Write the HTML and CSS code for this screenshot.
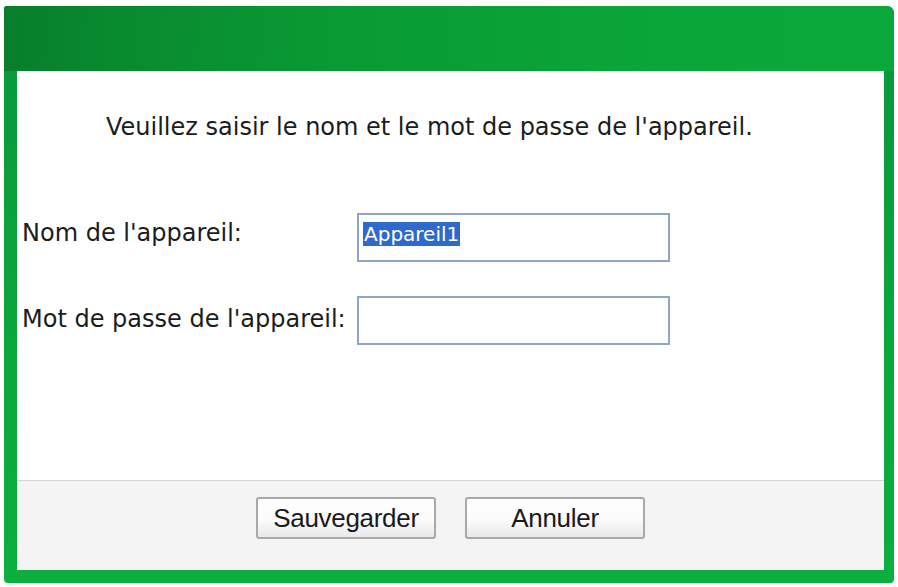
FILE: index.html
```html
<!DOCTYPE html>
<html lang="fr">
<head>
<meta charset="utf-8">
<title>Appareil</title>
<link rel="stylesheet" href="styles.css">
</head>
<body>
<div class="frame">
  <div class="band"></div>
  <div class="panel">
    <div class="content">
      <p class="intro">Veuillez saisir le nom et le mot de passe de l'appareil.</p>
      <div class="row row-first">
        <label class="label">Nom de l'appareil:</label>
        <div class="field"><span class="selected">Appareil1</span></div>
      </div>
      <div class="row row-second">
        <label class="label">Mot de passe de l'appareil:</label>
        <div class="field"></div>
      </div>
    </div>
    <div class="footer">
      <button class="btn" type="button">Sauvegarder</button>
      <button class="btn" type="button">Annuler</button>
    </div>
  </div>
</div>
</body>
</html>
```
FILE: styles.css
```css
html, body {
  margin: 0;
  padding: 0;
  background: #ffffff;
}

body {
  width: 898px;
  height: 587px;
  overflow: hidden;
  font-family: "DejaVu Sans", "Noto Sans", sans-serif;
}

.frame {
  margin: 6px 0 0 4px;
  width: 890px;
  height: 577px;
  box-sizing: border-box;
  padding: 0 10px 13px 13px;
  border-radius: 3px 7px 4px 4px;
  background: linear-gradient(180deg, #08963a 0%, #0aa33a 40%, #0bb03e 100%);
  display: flex;
  flex-direction: column;
}

.band {
  height: 65px;
  margin: 0 -10px 0 -13px;
  border-radius: 3px 7px 0 0;
  background:
    linear-gradient(100deg, rgba(0, 70, 20, 0.18) 0%, rgba(0, 70, 20, 0.08) 12%, rgba(0, 0, 0, 0) 40%),
    linear-gradient(90deg, #088a30 0%, #099a34 35%, #0aa538 70%, #0aa83a 100%);
}

.panel {
  flex: 1;
  display: flex;
  flex-direction: column;
  background: #ffffff;
}

.content {
  flex: 1;
  padding: 0 0 0 5px;
}

.intro {
  margin: 42px 0 0 84px;
  font-size: 24px;
  line-height: 28px;
  color: #1c1c1c;
}

.row {
  display: flex;
  align-items: flex-start;
}

.row-first {
  margin-top: 72px;
}

.row-second {
  margin-top: 34px;
}

.label {
  width: 335px;
  font-size: 24px;
  line-height: 28px;
  color: #1c1c1c;
}

.row-first .label {
  padding-top: 6px;
}

.row-second .label {
  padding-top: 9px;
}

.field {
  width: 313px;
  height: 49px;
  box-sizing: border-box;
  border: 2px solid #8ea7c6;
  background: #ffffff;
  padding: 7px 0 0 4px;
}

.selected {
  display: inline-block;
  background: #3069cc;
  color: #ffffff;
  font-size: 20px;
  line-height: 24px;
  padding: 0 1px;
}

.footer {
  height: 90px;
  border-top: 1px solid #d6d6d6;
  background: #f4f4f5;
  display: flex;
  justify-content: center;
  align-items: flex-start;
  gap: 29px;
  padding: 16px 0 0 0;
  box-sizing: border-box;
}

.btn {
  width: 180px;
  height: 42px;
  margin: 0;
  border: 2px solid #a9a9a9;
  border-radius: 3px;
  background: linear-gradient(180deg, #ffffff 0%, #fbfbfb 55%, #e9e9ec 100%);
  font-family: "Liberation Sans", Arial, sans-serif;
  font-size: 26px;
  line-height: 36px;
  color: #1a1a1a;
  padding: 0;
  letter-spacing: -0.3px;
}
```
